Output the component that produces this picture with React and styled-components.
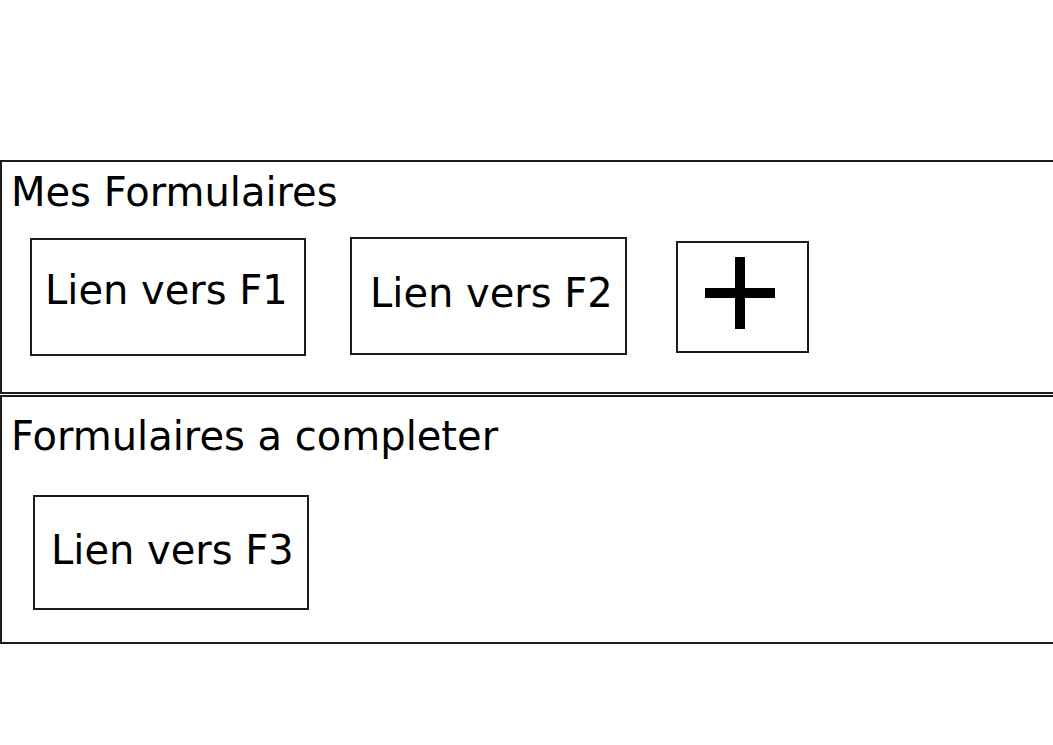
import React from "react";
import styled, { createGlobalStyle } from "styled-components";

const Global = createGlobalStyle`
  html, body {
    margin: 0;
    padding: 0;
    background: #ffffff;
    overflow: hidden;
  }
  body {
    font-family: "DejaVu Sans", "Liberation Sans", sans-serif;
    color: #000;
  }
  * { box-sizing: border-box; }
`;

const Page = styled.main`
  padding-top: 160px;
  display: flex;
  flex-direction: column;
  gap: 1px;
`;

const Section = styled.section`
  height: ${(p) => p.$h}px;
  border: 2px solid #1c1c1c;
  border-right: none;
  padding-top: ${(p) => p.$pt}px;
  display: flex;
  flex-direction: column;
`;

const Title = styled.h2`
  margin: 0;
  padding-left: 9px;
  font-weight: normal;
  font-size: 40px;
  line-height: 47px;
  white-space: nowrap;
`;

const Row = styled.div`
  display: flex;
  align-items: flex-start;
  margin-top: ${(p) => p.$mt}px;
  margin-left: ${(p) => p.$ml}px;
`;

const Card = styled.a`
  display: block;
  flex: none;
  width: ${(p) => p.$w}px;
  height: ${(p) => p.$h}px;
  margin-top: ${(p) => p.$dy || 0}px;
  margin-left: ${(p) => p.$gap || 0}px;
  border: 2px solid #1c1c1c;
  padding-top: ${(p) => p.$pt}px;
  padding-left: ${(p) => p.$pl}px;
  font-size: 40px;
  line-height: 47px;
  color: #000;
  text-decoration: none;
  white-space: nowrap;
`;

const AddButton = styled.button`
  flex: none;
  width: 133px;
  height: 112px;
  margin-top: 4px;
  margin-left: 49px;
  padding: 0;
  border: 2px solid #1c1c1c;
  background: #fff;
  display: block;
  cursor: pointer;
  svg { display: block; }
`;

const PlusIcon = () => (
  <svg width="129" height="108" viewBox="0 0 129 108">
    <rect x="27" y="45" width="70" height="10" fill="#000" />
    <rect x="57" y="14" width="10" height="72" fill="#000" />
  </svg>
);

export default function App() {
  return (
    <>
      <Global />
      <Page>
        <Section $h={234} $pt={7}>
          <Title>Mes Formulaires</Title>
          <Row $mt={21} $ml={28}>
            <Card href="#f1" $w={276} $h={118} $dy={1} $pt={27} $pl={13}>
              Lien vers F1
            </Card>
            <Card href="#f2" $w={277} $h={118} $gap={44} $pt={31} $pl={18}>
              Lien vers F2
            </Card>
            <AddButton aria-label="Ajouter un formulaire">
              <PlusIcon />
            </AddButton>
          </Row>
        </Section>
        <Section $h={249} $pt={16}>
          <Title>Formulaires a completer</Title>
          <Row $mt={35} $ml={31}>
            <Card href="#f3" $w={276} $h={115} $pt={30} $pl={16}>
              Lien vers F3
            </Card>
          </Row>
        </Section>
      </Page>
    </>
  );
}
